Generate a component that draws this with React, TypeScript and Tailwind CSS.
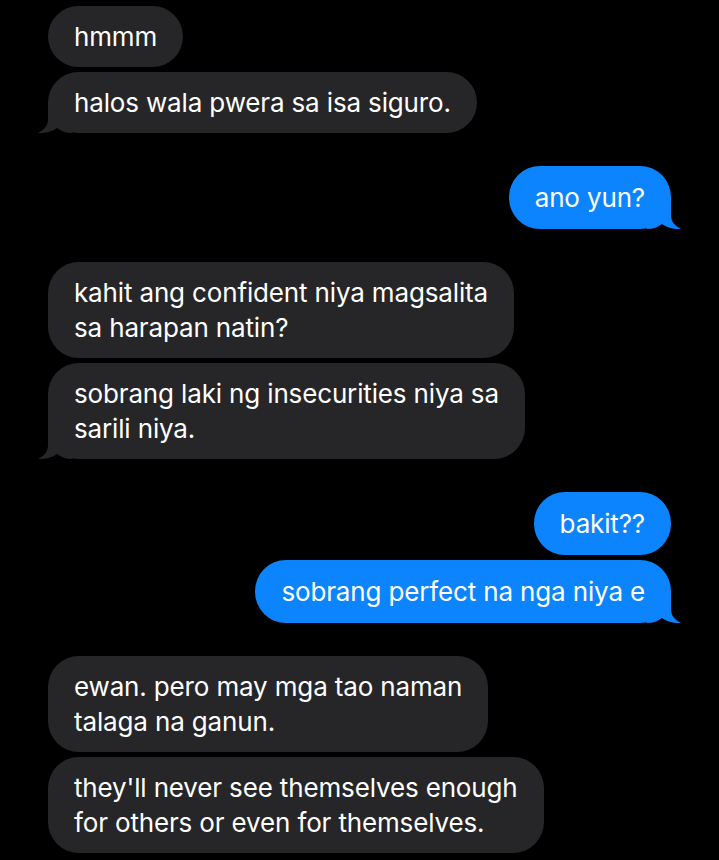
import React from "react";

type Msg = { lines: string[]; tail?: boolean };
type Group = { from: "me" | "them"; msgs: Msg[] };

const groups: Group[] = [
  {
    from: "them",
    msgs: [{ lines: ["hmmm"] }, { lines: ["halos wala pwera sa isa siguro."], tail: true }],
  },
  { from: "me", msgs: [{ lines: ["ano yun?"], tail: true }] },
  {
    from: "them",
    msgs: [
      { lines: ["kahit ang confident niya magsalita", "sa harapan natin?"] },
      { lines: ["sobrang laki ng insecurities niya sa", "sarili niya."], tail: true },
    ],
  },
  {
    from: "me",
    msgs: [{ lines: ["bakit??"] }, { lines: ["sobrang perfect na nga niya e"], tail: true }],
  },
  {
    from: "them",
    msgs: [
      { lines: ["ewan. pero may mga tao naman", "talaga na ganun."] },
      { lines: ["they'll never see themselves enough", "for others or even for themselves."] },
    ],
  },
];

function Tail({ side, color }: { side: "left" | "right"; color: string }) {
  // iMessage style tail hanging off the bottom corner
  if (side === "left") {
    return (
      <svg
        className="absolute bottom-0 -left-[10px]"
        width="34"
        height="32"
        viewBox="0 0 34 32"
      >
        <path
          d="M10 0 L10 18 C10 25 6 29 0 32 C7 32.5 14 30.5 19 27 C23 30 28 32 34 32 L34 0 Z"
          fill={color}
        />
      </svg>
    );
  }
  return (
    <svg
      className="absolute bottom-0 -right-[10px]"
      width="34"
      height="32"
      viewBox="0 0 34 32"
    >
      <path
        d="M24 0 L24 18 C24 25 28 29 34 32 C27 32.5 20 30.5 15 27 C11 30 6 32 0 32 L0 0 Z"
        fill={color}
      />
    </svg>
  );
}

function Bubble({ msg, mine }: { msg: Msg; mine: boolean }) {
  const color = mine ? "#0b84fe" : "#262629";
  return (
    <div
      className={`relative rounded-[31px] px-[26px] text-white ${
        mine ? "self-end bg-[#0b84fe] py-[14px]" : "self-start bg-[#262629] py-[13px]"
      }`}
    >
      {msg.tail && <Tail side={mine ? "right" : "left"} color={color} />}
      <div className="relative">
        {msg.lines.map((l, i) => (
          <div key={i} className="whitespace-nowrap">
            {l}
          </div>
        ))}
      </div>
    </div>
  );
}

export default function App() {
  return (
    <div
      className="min-h-[860px] w-[719px] overflow-hidden bg-black px-[48px] pt-[6px] text-[26px] leading-[35px] tracking-[-0.15px]"
      style={{ fontFamily: "Inter, 'Noto Sans', sans-serif" }}
    >
      <div className="flex flex-col gap-[33px]">
        {groups.map((g, gi) => (
          <div key={gi} className="flex flex-col gap-[5px]">
            {g.msgs.map((m, mi) => (
              <Bubble key={mi} msg={m} mine={g.from === "me"} />
            ))}
          </div>
        ))}
      </div>
    </div>
  );
}
